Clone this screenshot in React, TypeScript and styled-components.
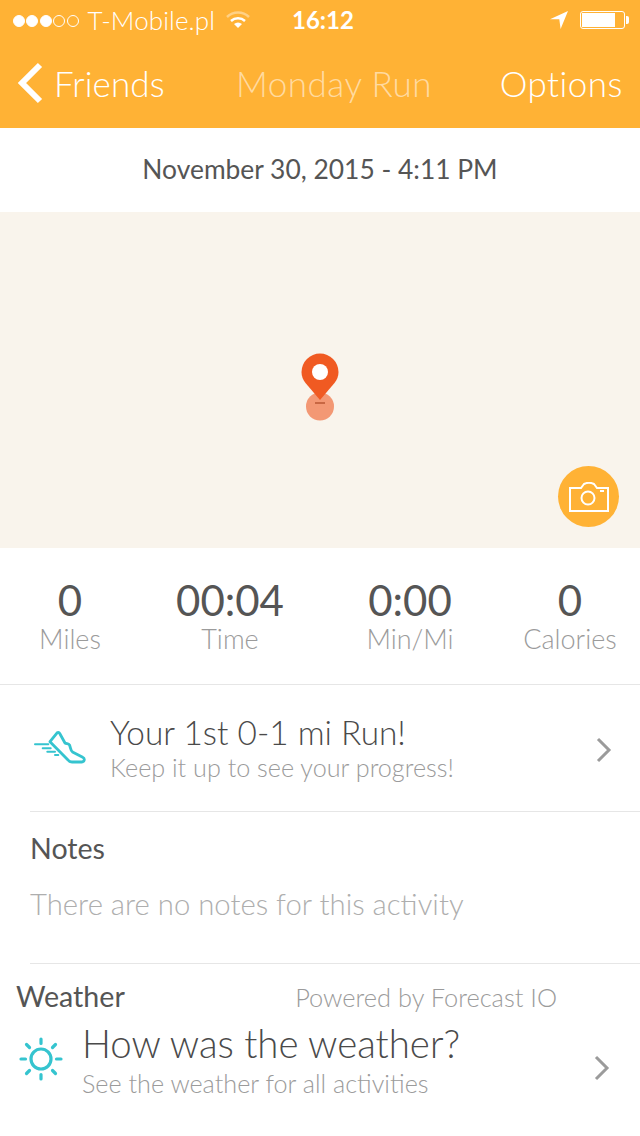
import React from 'react';
import styled, { createGlobalStyle } from 'styled-components';

const GlobalStyle = createGlobalStyle`
    html, body {
        margin: 0;
        padding: 0;
        background: #fff;
        font-family: Lato, "Open Sans", sans-serif;
    }
`;

const Screen = styled.div`
    width: 640px;
    height: 1136px;
    overflow: hidden;
    display: flex;
    flex-direction: column;
    background: #fff;
`;

const Header = styled.header`
    height: 128px;
    flex: none;
    background: #ffb235;
    color: #fff;
    display: flex;
    flex-direction: column;
`;

const StatusBar = styled.div`
    height: 42px;
    padding: 0 15px 0 13px;
    display: flex;
    align-items: center;
    position: relative;
    font-size: 26px;
    font-weight: 300;
`;

const Signal = styled.div`
    display: flex;
    gap: 1.4px;
    margin-right: 9px;
`;

const Dot = styled.span<{ $on: boolean }>`
    width: 12px;
    height: 12px;
    box-sizing: border-box;
    border-radius: 50%;
    border: 1px solid #fff;
    background: ${(p) => (p.$on ? '#fff' : 'transparent')};
`;

const Carrier = styled.span`
    letter-spacing: 0.1px;
    margin-top: -3px;
`;

const Clock = styled.span`
    position: absolute;
    left: 292px;
    top: 5px;
    font-weight: 700;
    font-size: 24px;
`;

const StatusRight = styled.div`
    margin-left: auto;
    display: flex;
    align-items: center;
    gap: 12px;
    margin-top: -2px;
`;

const Battery = styled.div`
    width: 45px;
    height: 18px;
    box-sizing: border-box;
    border: 1px solid #fff;
    border-radius: 3px;
    padding: 1px;
    position: relative;
    &::after {
        content: '';
        position: absolute;
        right: -5px;
        top: 4px;
        width: 3px;
        height: 8px;
        background: #fff;
        border-radius: 0 2px 2px 0;
    }
`;

const BatteryFill = styled.div`
    width: 33px;
    height: 100%;
    background: #fff;
`;

const NavBar = styled.nav`
    flex: 1;
    display: flex;
    align-items: center;
    padding: 0 17px 4px;
    font-size: 35px;
    font-weight: 300;
    letter-spacing: 0.5px;
    position: relative;
`;

const BackButton = styled.div`
    display: flex;
    align-items: center;
    gap: 11px;
    letter-spacing: 0.1px;
`;

const NavTitle = styled.div`
    position: absolute;
    left: 236px;
    color: rgba(255, 255, 255, 0.55);
`;

const NavAction = styled.div`
    margin-left: auto;
`;

const DateRow = styled.div`
    height: 84px;
    padding-bottom: 2px;
    box-sizing: border-box;
    flex: none;
    display: flex;
    align-items: center;
    justify-content: center;
    font-size: 26.4px;
    color: #555;
`;

const MapArea = styled.div`
    height: 336px;
    flex: none;
    background: #f9f4ec;
    position: relative;
`;

const Pin = styled.svg`
    position: absolute;
    left: 300px;
    top: 141px;
`;

const CameraButton = styled.div`
    position: absolute;
    left: 558px;
    top: 254px;
    width: 61px;
    height: 61px;
    border-radius: 50%;
    background: #ffb235;
    display: flex;
    align-items: center;
    justify-content: center;
`;

const Stats = styled.div`
    height: 137px;
    flex: none;
    display: grid;
    grid-template-columns: 140px 180px 180px 140px;
    box-sizing: border-box;
    border-bottom: 1px solid #e6e6e6;
    padding-top: 28px;
`;

const Stat = styled.div`
    display: flex;
    flex-direction: column;
    align-items: center;
`;

const StatValue = styled.div`
    font-size: 42px;
    line-height: 48px;
    color: #555;
`;

const StatLabel = styled.div`
    font-size: 27px;
    line-height: 30px;
    font-weight: 300;
    color: #9b9b9b;
`;

const ListRow = styled.div<{ $height: number; $left: number; $right: number }>`
    height: ${(p) => p.$height}px;
    flex: none;
    display: flex;
    align-items: center;
    padding: 0 ${(p) => p.$right}px 0 ${(p) => p.$left}px;
`;

const RowText = styled.div<{ $lift: number }>`
    flex: 1;
    display: flex;
    flex-direction: column;
    margin-bottom: ${(p) => p.$lift}px;
`;

const RowTitle = styled.div<{ $size: number }>`
    font-size: ${(p) => p.$size}px;
    line-height: 40px;
    color: #4a4a4a;
    font-weight: 300;
`;

const RowSub = styled.div<{ $gap: number }>`
    margin-top: ${(p) => p.$gap}px;
    font-size: 25.2px;
    line-height: 30px;
    font-weight: 300;
    color: #9b9b9b;
`;

const Divider = styled.div`
    height: 1px;
    flex: none;
    margin-left: 30px;
    background: #e6e6e6;
`;

const NotesSection = styled.section`
    height: 151px;
    flex: none;
    padding: 16px 0 0 30px;
    box-sizing: border-box;
`;

const SectionTitle = styled.div`
    font-size: 28.6px;
    line-height: 40px;
    color: #555;
`;

const NotesText = styled.div`
    margin-top: 16px;
    font-size: 29.3px;
    line-height: 40px;
    font-weight: 300;
    color: #aeaeae;
`;

const WeatherHead = styled.div`
    display: flex;
    justify-content: space-between;
    padding: 12px 83px 0 16px;
`;

const PoweredBy = styled.div`
    font-size: 25.4px;
    line-height: 40px;
    font-weight: 300;
    color: #9b9b9b;
    margin-top: 1px;
`;

const Icon = styled.svg`
    flex: none;
`;

const ShoeIcon = styled(Icon)`
    margin-right: 24px;
`;

const SunIcon = styled(Icon)`
    margin: 0 19px 3px 0;
`;

const WifiIcon = styled(Icon)`
    margin: -2px 0 0 10px;
`;

const ChevronIcon = styled(Icon)<{ $drop: number }>`
    margin-top: ${(p) => p.$drop}px;
`;

const Chevron = ({ drop }: { drop: number }) => (
    <ChevronIcon $drop={drop} width="16" height="26" viewBox="0 0 16 26" fill="none" stroke="#9b9b9b" strokeWidth="3">
        <path d="M2 2l11 11L2 24" />
    </ChevronIcon>
);

export default function App() {
    return (
        <Screen>
            <GlobalStyle />
            <Header>
                <StatusBar>
                    <Signal>
                        {[true, true, true, false, false].map((on, i) => (
                            <Dot key={i} $on={on} />
                        ))}
                    </Signal>
                    <Carrier>T-Mobile.pl</Carrier>
                    <WifiIcon width="26" height="20" viewBox="0 0 26 20" fill="none" stroke="#fff">
                        <path d="M2 7a16 16 0 0 1 22 0" strokeWidth="2.5" opacity="0.4" />
                        <path d="M6 11a10.500 10.500 0 0 1 14 0" strokeWidth="2.500" />
                        <path d="M13 18l-4-4a6 6 0 0 1 8 0z" fill="#fff" stroke="none" />
                    </WifiIcon>
                    <Clock>16:12</Clock>
                    <StatusRight>
                        <Icon width="18" height="18" viewBox="0 0 18 18" fill="#fff">
                            <path d="M18 0L0 8.300h9.300L10.600 18z" />
                        </Icon>
                        <Battery>
                            <BatteryFill />
                        </Battery>
                    </StatusRight>
                </StatusBar>
                <NavBar>
                    <BackButton>
                        <Icon width="26" height="42" viewBox="0 0 26 42" fill="none" stroke="#fff" strokeWidth="6">
                            <path d="M23 3L5 21l18 18" />
                        </Icon>
                        <span>Friends</span>
                    </BackButton>
                    <NavTitle>Monday Run</NavTitle>
                    <NavAction>Options</NavAction>
                </NavBar>
            </Header>
            <DateRow>November 30, 2015 - 4:11 PM</DateRow>
            <MapArea>
                <Pin width="40" height="70" viewBox="0 0 40 70">
                    <circle cx="20" cy="53.500" r="14" fill="#ef5a24" opacity="0.6" />
                    <path d="M20 47L5.500 30C3 27 1.500 23 1.500 19a18.500 18.500 0 0 1 37 0c0 4-1.500 8-4 11z" fill="#f05a22" />
                    <circle cx="20" cy="19" r="8" fill="#fff" />
                    <rect x="15" y="49" width="10" height="2" fill="#b5532f" opacity="0.7" />
                </Pin>
                <CameraButton>
                    <Icon width="40" height="30" viewBox="0 0 40 30" fill="none" stroke="#fff" strokeWidth="2">
                        <path d="M1 6h11l3-4c3-1.500 7-1.500 10 0l3 4h11v23H1z" />
                        <circle cx="19" cy="16" r="6.500" />
                        <path d="M31 9h4" />
                    </Icon>
                </CameraButton>
            </MapArea>
            <Stats>
                <Stat>
                    <StatValue>0</StatValue>
                    <StatLabel>Miles</StatLabel>
                </Stat>
                <Stat>
                    <StatValue>00:04</StatValue>
                    <StatLabel>Time</StatLabel>
                </Stat>
                <Stat>
                    <StatValue>0:00</StatValue>
                    <StatLabel>Min/Mi</StatLabel>
                </Stat>
                <Stat>
                    <StatValue>0</StatValue>
                    <StatLabel>Calories</StatLabel>
                </Stat>
            </Stats>
            <ListRow $height={126} $left={34} $right={28}>
                <ShoeIcon width="52" height="36" viewBox="0 0 52 36" fill="none" stroke="#35c4cf" strokeWidth="2.800" strokeLinecap="round" strokeLinejoin="round">
                    <path d="M23.300 2.700L16 11.700 34 30c1 1.500 2 2 4 2h9.700c3 0 3.500-3.500 1-4.700L38.500 22c-2-1.500-2-5-3-7-1-1.500-3-1-4.500-2L26 4c-.7-1.500-1.800-2-2.700-1.300z" />
                    <path d="M1 14.300h13.300M8.700 18.300h8M13.300 21.700H21M21 25h3.300" strokeWidth="2" />
                </ShoeIcon>
                <RowText $lift={2}>
                    <RowTitle $size={33.4}>Your 1st 0-1 mi Run!</RowTitle>
                    <RowSub $gap={0}>Keep it up to see your progress!</RowSub>
                </RowText>
                <Chevron drop={3} />
            </ListRow>
            <Divider />
            <NotesSection>
                <SectionTitle>Notes</SectionTitle>
                <NotesText>There are no notes for this activity</NotesText>
            </NotesSection>
            <Divider />
            <WeatherHead>
                <SectionTitle>Weather</SectionTitle>
                <PoweredBy>Powered by Forecast IO</PoweredBy>
            </WeatherHead>
            <ListRow $height={86} $left={19} $right={30}>
                <SunIcon width="44" height="44" viewBox="0 0 44 44" fill="none" stroke="#35c4cf" strokeWidth="3.200" strokeLinecap="round">
                    <circle cx="22" cy="22" r="10" />
                    <path d="M22 2v4.500M22 37.500V42M2 22h4.500M37.500 22H42M7.500 7.500l3 3M33.500 33.500l3 3M7.500 36.500l3-3M33.500 10.500l3-3" />
                </SunIcon>
                <RowText $lift={0}>
                    <RowTitle $size={38.4}>How was the weather?</RowTitle>
                    <RowSub $gap={5}>See the weather for all activities</RowSub>
                </RowText>
                <Chevron drop={15} />
            </ListRow>
        </Screen>
    );
}
